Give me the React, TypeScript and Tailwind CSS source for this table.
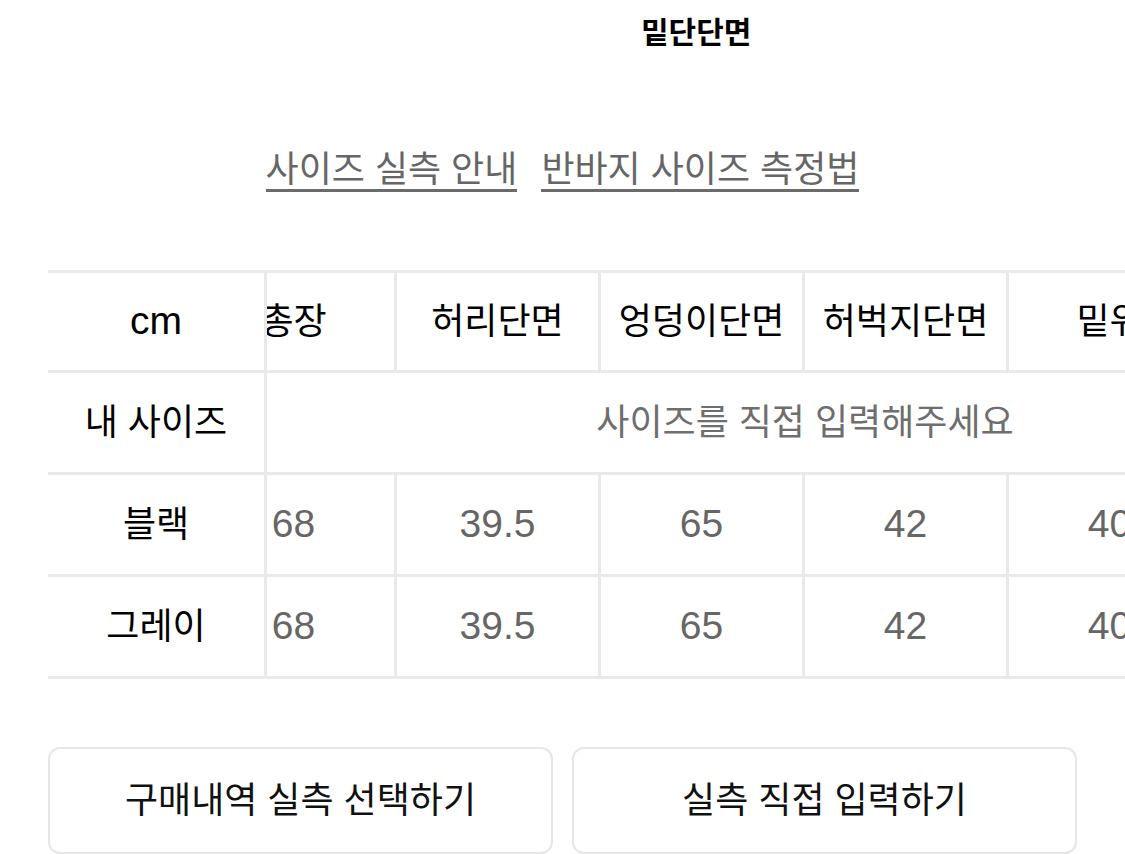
import React from "react";

const FONT = { fontFamily: '"Liberation Sans", "Noto Sans CJK KR", sans-serif' };

const columns = ["총장", "허리단면", "엉덩이단면", "허벅지단면", "밑위", "밑단단면"];
const rows: { name: string; values: string[] }[] = [
  { name: "블랙", values: ["68", "39.5", "65", "42", "40", "22"] },
  { name: "그레이", values: ["68", "39.5", "65", "42", "40", "22"] },
];

export default function App() {
  return (
    <div className="w-[1125px] h-[854px] overflow-hidden bg-white" style={FONT}>
      {/* title */}
      <div className="h-[66px] flex items-center pl-[641px]">
        <span className="text-[30px] leading-none font-bold text-black whitespace-nowrap">밑단단면</span>
      </div>

      {/* links */}
      <div className="mt-[86px] flex justify-center gap-[24px]">
        <span className="inline-block text-[36px] leading-[36px] text-[#666] pb-[1px] border-b-[3px] border-[#6b6b6b] whitespace-nowrap">
          사이즈 실측 안내
        </span>
        <span className="inline-block text-[36px] leading-[36px] text-[#666] pb-[1px] border-b-[3px] border-[#6b6b6b] whitespace-nowrap">
          반바지 사이즈 측정법
        </span>
      </div>

      {/* table */}
      <div className="mt-[78px] ml-[48px] flex">
        <div className="w-[219px] shrink-0 border-t-[3px] border-r-[3px] border-[#e9e9e9] flex flex-col">
          <div className="h-[100px] border-b-[3px] border-[#e9e9e9] flex items-center justify-center text-[39px] text-black">
            cm
          </div>
          <div className="h-[102px] border-b-[3px] border-[#e9e9e9] flex items-center justify-center text-[36px] text-black whitespace-nowrap">
            내 사이즈
          </div>
          {rows.map((r) => (
            <div
              key={r.name}
              className="h-[102px] border-b-[3px] border-[#e9e9e9] flex items-center justify-center text-[36px] text-black"
            >
              {r.name}
            </div>
          ))}
        </div>
        <div className="flex-1 overflow-hidden border-t-[3px] border-[#e9e9e9]">
          <div className="-ml-[74px] w-[1224px] flex flex-col">
            <div className="h-[100px] flex border-b-[3px] border-[#e9e9e9]">
              {columns.map((c) => (
                <div
                  key={c}
                  className="w-[204px] shrink-0 border-r-[3px] border-[#e9e9e9] flex items-center justify-center text-[36px] text-black whitespace-nowrap"
                >
                  {c}
                </div>
              ))}
            </div>
            <div className="h-[102px] flex items-center justify-center border-b-[3px] border-[#e9e9e9] text-[36px] text-[#6e6e6e] whitespace-nowrap">
              사이즈를 직접 입력해주세요
            </div>
            {rows.map((r) => (
              <div key={r.name} className="h-[102px] flex border-b-[3px] border-[#e9e9e9]">
                {r.values.map((v, i) => (
                  <div
                    key={i}
                    className="w-[204px] shrink-0 border-r-[3px] border-[#e9e9e9] flex items-center justify-center text-[39px] text-[#666]"
                  >
                    {v}
                  </div>
                ))}
              </div>
            ))}
          </div>
        </div>
      </div>

      {/* buttons */}
      <div className="mt-[68px] mx-[48px] flex gap-[19px]">
        <button className="flex-1 h-[107px] rounded-[12px] border-2 border-[#e6e6e6] bg-white text-[36px] text-[#111] flex items-center justify-center whitespace-nowrap">
          구매내역 실측 선택하기
        </button>
        <button className="flex-1 h-[107px] rounded-[12px] border-2 border-[#e6e6e6] bg-white text-[36px] text-[#111] flex items-center justify-center whitespace-nowrap">
          실측 직접 입력하기
        </button>
      </div>
    </div>
  );
}
